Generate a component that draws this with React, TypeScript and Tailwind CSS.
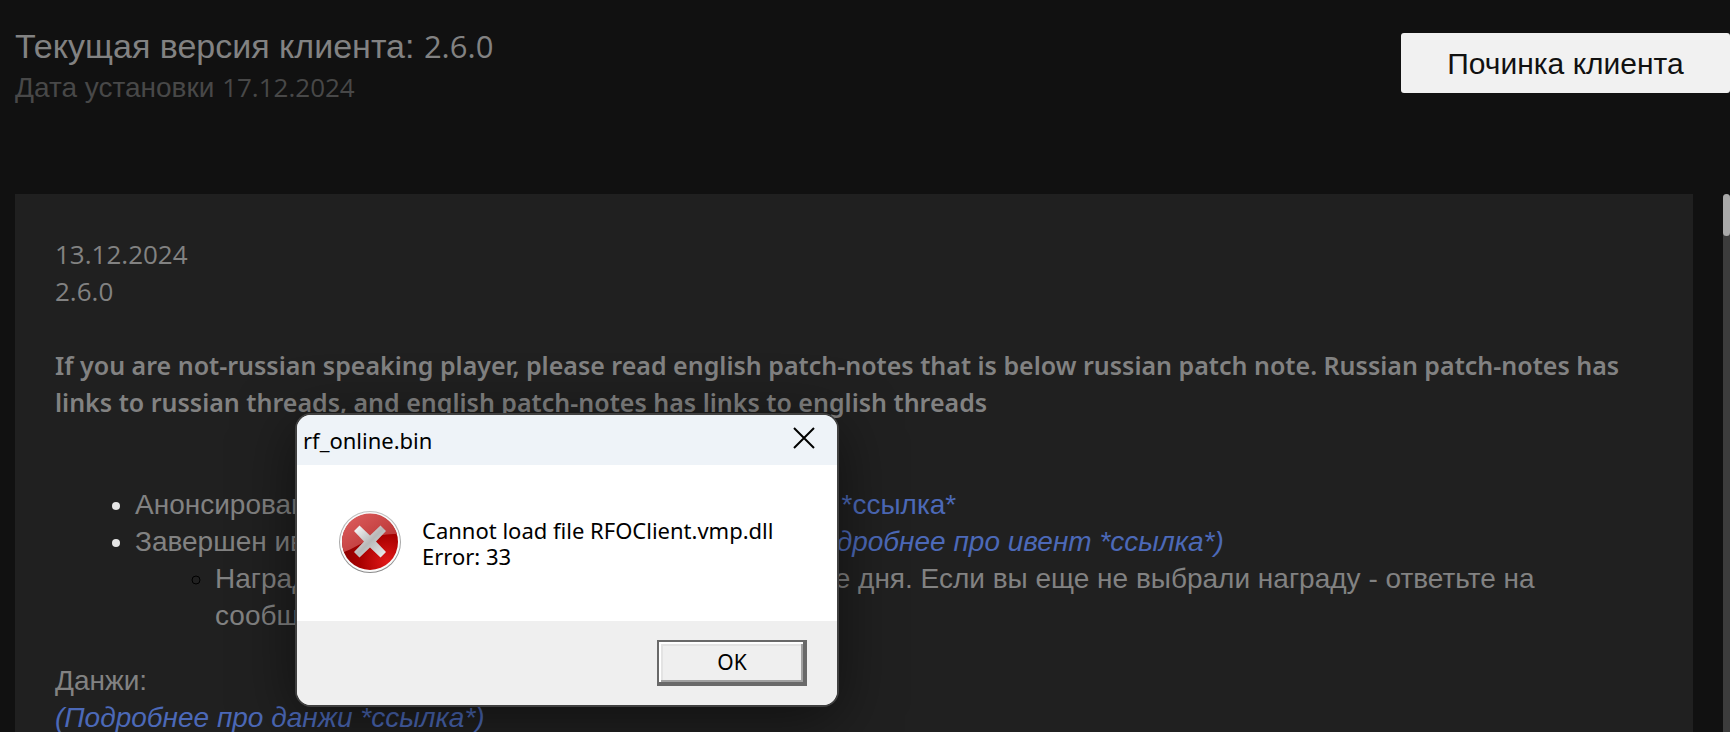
import { ReactNode } from 'react';

// Latin text and digits are set in a humanist face, Cyrillic in the Arial-like one
function Latin({ children }: { children: ReactNode }) {
  return <span className="font-['Open_Sans',sans-serif] text-[26px]">{children}</span>;
}

function ErrorIcon() {
  return (
    <svg viewBox="0 2 64 64" className="h-16 w-16 shrink-0" aria-hidden="true">
      <defs>
        <linearGradient id="ring" x1="0" y1="0" x2="0" y2="1">
          <stop offset="0" stopColor="#c4c4c4" />
          <stop offset="1" stopColor="#8a8a8a" />
        </linearGradient>
        <radialGradient id="red" cx="0.8" cy="0.85" r="0.8">
          <stop offset="0" stopColor="#e01818" />
          <stop offset="0.6" stopColor="#a80000" />
          <stop offset="1" stopColor="#8c0000" />
        </radialGradient>
        <linearGradient id="gloss" x1="0" y1="0" x2="1" y2="1">
          <stop offset="0" stopColor="#e06060" />
          <stop offset="1" stopColor="#b02c2c" />
        </linearGradient>
        <linearGradient id="cross" x1="0" y1="0" x2="1" y2="1">
          <stop offset="0" stopColor="#ffffff" />
          <stop offset="0.5" stopColor="#b8b8b8" />
          <stop offset="1" stopColor="#f0f0f0" />
        </linearGradient>
      </defs>
      <circle cx="32" cy="33" r="31" fill="url(#ring)" />
      <circle cx="32" cy="33" r="30" fill="#fafafa" />
      <circle cx="32" cy="33" r="28" fill="url(#red)" />
      <path d="M4 33a28 28 0 0 1 55-8c-10 0-18 1-27 5-10 5-18 10-26 13a28 28 0 0 1-2-10z" fill="url(#gloss)" />
      <path
        d="M21.500 16.500l10.500 10 10.500-10 5.500 5.500-10 10.500 10 10.500-5.500 5.500-10.500-10-10.500 10-5.500-5.500 10-10.500-10-10.500z"
        fill="url(#cross)"
      />
    </svg>
  );
}

function ErrorDialog() {
  return (
    <div
      role="alertdialog"
      aria-labelledby="dialog-title"
      aria-describedby="dialog-text"
      className="absolute top-[413px] left-[295px] w-[544px] overflow-hidden rounded-2xl border-2 border-[#404040] bg-white font-['Noto_Sans',sans-serif] text-black shadow-[0_12px_60px_rgba(0,0,0,0.5)]"
    >
      <div className="flex h-[50px] items-center justify-between bg-[#eef3f8] pr-[21px] pl-1.5">
        <h2 id="dialog-title" className="text-[22px]">rf_online.bin</h2>
        <button type="button" aria-label="Close" className="pb-1">
          <svg viewBox="0 0 24 24" className="h-6 w-6" fill="none" stroke="currentColor" strokeWidth="2">
            <path d="M2 2l20 20M22 2L2 22" />
          </svg>
        </button>
      </div>
      <div className="flex h-[156px] items-center gap-5 pl-[41px]">
        <ErrorIcon />
        <p id="dialog-text" className="text-[22px] leading-[26px]">
          Cannot load file RFOClient.vmp.dll
          <br />
          Error: 33
        </p>
      </div>
      <div className="flex h-[84px] items-center justify-end bg-[#efefef] pr-[30px]">
        <button
          type="button"
          className="h-[46px] w-[150px] border-2 border-[#696969] text-[21px] shadow-[inset_-2px_-2px_0_#696969,inset_2px_2px_0_#fff,inset_-4px_-4px_0_#a0a0a0,inset_4px_4px_0_#e3e3e3]"
        >
          OK
        </button>
      </div>
    </div>
  );
}

export default function App() {
  return (
    <div className="relative flex h-screen flex-col overflow-hidden bg-[#111111] font-['Liberation_Sans',sans-serif] text-[#828282]">
      <header className="flex items-start justify-between pt-[25px] pl-[15px]">
        <div>
          <h1 className="text-[34px] leading-[42px]">
            Текущая версия клиента: <span className="font-['Open_Sans',sans-serif] text-[31px]">2.6.0</span>
          </h1>
          <p className="text-[28px] leading-[40px] text-[#484848]">
            Дата установки <Latin>17.12.2024</Latin>
          </p>
        </div>
        <button type="button" className="mt-2 h-[60px] w-[329px] rounded-[3px] bg-[#f1f1f1] text-[30px] text-[#111111]">
          Починка клиента
        </button>
      </header>

      <div className="mt-[86px] flex min-h-0 flex-1 pl-[15px]">
        <main className="mr-[30px] flex-1 overflow-hidden bg-[#202020] px-10 pt-[42px] text-[28px] leading-[37px]">
          <div className="font-['Open_Sans',sans-serif] text-[26px] leading-[37px]">
            <p>13.12.2024</p>
            <p>2.6.0</p>
          </div>
          <p className="mt-[37px] font-['Noto_Sans',sans-serif] text-[25px] leading-[37px] font-semibold">
            If you are not-russian speaking player, please read english patch-notes that is below russian patch note.
            Russian patch-notes has links to russian threads, and english patch-notes has links to english threads
          </p>

          <ul className="mt-[65px] mb-7 list-disc pl-20">
            <li className="marker:text-[#e5e5e5]">
              Анонсирован
              <span className="inline-block w-[535px]" />
              <a href="#announce" className="text-[#4c69b8]">*ссылка*</a>
            </li>
            <li className="marker:text-[#e5e5e5]">
              Завершен ивент
              <span className="inline-block w-[443px]" />
              <a href="#event" className="text-[#4c69b8] italic">(Подробнее про ивент *ссылка*)</a>
            </li>
            <li className="list-none">
              <ul className="list-[circle] pl-20">
                <li className="marker:text-black">
                  Награды
                  <span className="inline-block w-[395px]" />
                  в течение дня. Если вы еще не выбрали награду - ответьте на сообщение
                </li>
              </ul>
            </li>
          </ul>

          <p>Данжи:</p>
          <p>
            <a href="#dungeons" className="text-[#4c69b8] italic">(Подробнее про данжи *ссылка*)</a>
          </p>
        </main>
        <div className="w-[7px] rounded-t bg-[#3c3c3c]">
          <div className="h-[42px] rounded bg-[#a9a9a9]" />
        </div>
      </div>

      <ErrorDialog />
    </div>
  );
}
